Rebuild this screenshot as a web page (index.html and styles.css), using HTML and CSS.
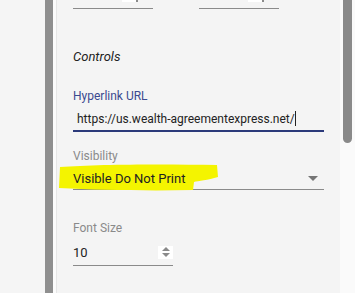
FILE: index.html
```html
<!DOCTYPE html>
<html>
<head>
<meta charset="utf-8">
<link rel="stylesheet" href="styles.css">
</head>
<body>
<div class="frame">
  <div class="gutter"></div>
  <div class="divider"></div>
  <div class="edge"></div>

  <!-- Properties panel -->
  <div class="panel">
    <div class="row-top">
      <div class="field-short"><span class="spin-tail"></span></div>
      <div class="field-short"><span class="spin-tail"></span></div>
    </div>

    <div class="section-title">Controls</div>

    <div class="field">
      <label class="field-label active">Hyperlink URL</label>
      <div class="field-input focused">https://us.wealth-agreementexpress.net/<span class="caret"></span></div>
    </div>

    <div class="field">
      <label class="field-label">Visibility</label>
      <div class="field-input select">
        <svg class="marker" width="162" height="30" viewBox="0 0 162 30">
          <path d="M2 4 C40 1 110 1 159 2 L160 14 C150 17 140 18 136 19 L135 27 C90 28 40 27 1 25 Z" fill="#f4f400"/>
        </svg>
        <span class="value">Visible Do Not Print</span>
        <svg class="arrow" width="10" height="5" viewBox="0 0 10 5"><path d="M0 0 H10 L5 5 Z" fill="#757575"/></svg>
      </div>
    </div>

    <div class="field narrow">
      <label class="field-label">Font Size</label>
      <div class="field-input number">
        <span>10</span>
        <span class="spinner">
          <svg width="10" height="12" viewBox="0 0 10 12"><path d="M1 5 L5 1 L9 5 Z M1 7 L9 7 L5 11 Z" fill="#8a8a8a"/></svg>
        </span>
      </div>
    </div>
  </div>

  <div class="scroll-track">
    <div class="scroll-thumb"></div>
  </div>
</div>
</body>
</html>
```

FILE: styles.css
```css
body {
  margin: 0;
  background-color: #f5f5f5;
  font-family: Roboto, "Noto Sans", sans-serif;
}

.frame {
  display: flex;
  height: 293px;
  overflow: hidden;
}

.gutter {
  width: 45px;
  background-color: #f5f5f5;
}

.divider {
  width: 8px;
  background-color: #8f8f8f;
}

.edge {
  width: 4px;
  background-color: #fbfbfb;
  border-right: 1px solid #e6e6e6;
  box-sizing: border-box;
}

/* Panel */
.panel {
  width: 283px;
  padding: 0 16px;
  box-sizing: border-box;
  background-color: #f4f4f4;
}

.row-top {
  display: flex;
  gap: 46px;
}

.field-short {
  width: 65px;
  height: 8px;
  border-bottom: 1px solid #8a8a8a;
  display: flex;
  justify-content: flex-end;
  padding-right: 15px;
}

.spin-tail {
  width: 14px;
  height: 2px;
  background-color: #fff;
  border-right: 2px solid #8a8a8a;
}

.section-title {
  margin-top: 40px;
  font-size: 13px;
  font-style: italic;
  color: #222;
}

.field {
  margin-top: 25px;
  width: 251px;
}

.field + .field {
  margin-top: 17px;
}

.field.narrow {
  width: 100px;
  margin-top: 31px;
}

.field-label {
  display: block;
  font-size: 12px;
  color: #8a8a8a;
  line-height: 14px;
}

.field-label.active {
  color: #3b4a8f;
}

.field-input {
  position: relative;
  display: flex;
  align-items: center;
  height: 22px;
  margin-top: 4px;
  font-size: 13px;
  color: #222;
  border-bottom: 1px solid #8a8a8a;
}

.field-input.focused {
  padding-left: 4px;
  font-size: 12px;
  border-bottom: 2px solid #2b3a7a;
  height: 23px;
}

.caret {
  display: inline-block;
  width: 1px;
  height: 15px;
  background-color: #222;
}

.select {
  justify-content: space-between;
}

.select .value {
  position: relative;
}

.marker {
  position: absolute;
  left: -15px;
  top: -4px;
}

.arrow {
  margin-right: 6px;
}

.number {
  height: 26px;
  justify-content: space-between;
}

.spinner {
  display: flex;
  align-items: center;
  justify-content: center;
  width: 15px;
  height: 13px;
  background-color: #fff;
}

/* Scrollbar */
.scroll-track {
  width: 15px;
  background-color: #fafafa;
  padding-left: 3px;
  box-sizing: border-box;
}

.scroll-thumb {
  width: 9px;
  height: 143px;
  background-color: #8a8a8a;
  border-radius: 0 0 5px 5px;
}
```
